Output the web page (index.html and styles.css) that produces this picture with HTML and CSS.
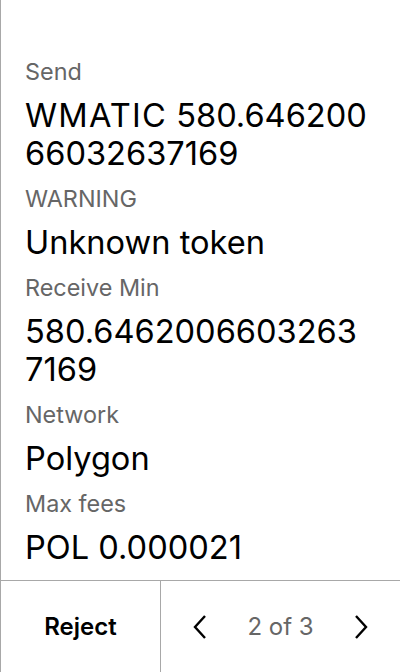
FILE: index.html
```html
<!DOCTYPE html>
<html>
<head>
<meta charset="utf-8">
<link rel="stylesheet" href="styles.css">
</head>
<body>
<div class="screen">
  <div class="content">
    <div class="field">
      <div class="label">Send</div>
      <div class="value"><span class="ticker">WMATIC</span> 580.646200<br>66032637169</div>
    </div>
    <div class="field">
      <div class="label">WARNING</div>
      <div class="value">Unknown token</div>
    </div>
    <div class="field">
      <div class="label">Receive Min</div>
      <div class="value">580.6462006603263<br>7169</div>
    </div>
    <div class="field">
      <div class="label">Network</div>
      <div class="value">Polygon</div>
    </div>
    <div class="field">
      <div class="label">Max fees</div>
      <div class="value">POL 0.000021</div>
    </div>
  </div>
  <div class="footer">
    <div class="reject">Reject</div>
    <div class="pager">
      <svg class="chev" width="18" height="28" viewBox="0 0 18 28"><path d="M14 3 L4 14 L14 25" fill="none" stroke="#000" stroke-width="2.4"/></svg>
      <span class="count">2 of 3</span>
      <svg class="chev" width="18" height="28" viewBox="0 0 18 28"><path d="M4 3 L14 14 L4 25" fill="none" stroke="#000" stroke-width="2.4"/></svg>
    </div>
  </div>
</div>
</body>
</html>
```
FILE: styles.css
```css
html, body {
  margin: 0;
  padding: 0;
  background: #fff;
}
.screen {
  width: 400px;
  height: 672px;
  box-sizing: border-box;
  border-left: 1px solid #a8a8a8;
  display: flex;
  flex-direction: column;
  font-family: Inter, "Noto Sans", sans-serif;
  color: #000;
}
.content {
  flex: 1;
  padding: 58px 24px 0 24px;
  display: flex;
  flex-direction: column;
  gap: 13px;
}
.label {
  font-size: 23.4px;
  line-height: 28px;
  color: #666;
  margin-bottom: 10px;
}
.value {
  font-size: 32.6px;
  line-height: 38px;
  color: #000;
  white-space: nowrap;
}
.ticker {
  letter-spacing: 1.2px;
}
.footer {
  height: 92px;
  border-top: 1px solid #a8a8a8;
  display: flex;
  box-sizing: border-box;
}
.reject {
  width: 159px;
  border-right: 1px solid #a8a8a8;
  display: flex;
  align-items: center;
  justify-content: center;
  font-size: 24px;
  font-weight: 600;
}
.pager {
  flex: 1;
  display: flex;
  align-items: center;
  justify-content: space-between;
  padding: 0 30px;
}
.count {
  font-size: 24px;
  color: #666;
}
```
